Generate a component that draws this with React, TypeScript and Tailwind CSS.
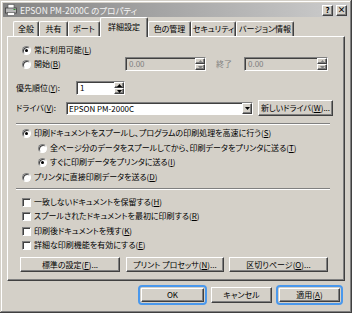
import React from "react";

const raised =
  "bg-[#d4d0c8] border border-t-white border-l-white border-r-[#404040] border-b-[#404040] shadow-[inset_-1px_-1px_#808080]";
const sunken =
  "border border-t-[#808080] border-l-[#808080] border-r-white border-b-white shadow-[inset_1px_1px_#404040]";

const U = ({ children }: { children: React.ReactNode }) => <u className="underline underline-offset-1">{children}</u>;

const Radio = ({ checked }: { checked?: boolean }) => (
  <span className="relative flex h-[9px] w-[9px] shrink-0 items-center justify-center rounded-full border border-t-[#808080] border-l-[#808080] border-r-white border-b-white bg-white shadow-[inset_1px_1px_#404040]">
    {checked && <span className="h-[3px] w-[3px] rounded-full bg-black" />}
  </span>
);

const Check = () => <span className={`h-[9px] w-[9px] shrink-0 bg-white ${sunken}`} />;

const Tri = ({ up, dim }: { up?: boolean; dim?: boolean }) => (
  <svg width="5" height="3" viewBox="0 0 5 3">
    <polygon points={up ? "2.5,0 5,3 0,3" : "0,0 5,0 2.5,3"} fill={dim ? "#808080" : "#000"} />
  </svg>
);

const Spin = ({ value, w, disabled }: { value: string; w: string; disabled?: boolean }) => (
  <div className={`flex h-[14px] items-stretch ${w} ${sunken} ${disabled ? "bg-[#d4d0c8] text-[#808080]" : "bg-white"}`}>
    <span className="flex-1 pl-[3px] leading-[12px]">{value}</span>
    <div className="flex w-[10px] flex-col">
      <span className={`flex flex-1 items-center justify-center ${raised}`}>
        <Tri up dim={disabled} />
      </span>
      <span className={`flex flex-1 items-center justify-center ${raised}`}>
        <Tri dim={disabled} />
      </span>
    </div>
  </div>
);

const Btn = ({ children, w, h = "h-[15px]" }: { children: React.ReactNode; w: string; h?: string }) => (
  <div className={`flex items-center justify-center ${w} ${h} ${raised}`}>{children}</div>
);

const Tab = ({ label, w, active }: { label: string; w: string; active?: boolean }) => (
  <div
    className={`flex items-center justify-center rounded-t-[2px] border-t border-l border-r border-t-white border-l-white border-r-[#404040] bg-[#d4d0c8] shadow-[inset_-1px_0_#808080] ${w} ${
      active ? "relative z-10 mb-[-1px] h-[20px] pb-[2px]" : "h-[15px]"
    }`}
  >
    {label}
  </div>
);

const Sep = () => <div className="ml-[8px] h-[2px] w-[314px] border-t border-t-[#808080] border-b border-b-white" />;

export default function App() {
  return (
    <div className="h-[313px] w-[352px] overflow-hidden bg-[#d4d0c8] p-[3px] font-['Noto_Sans_CJK_JP',sans-serif] text-[8px] leading-[12px] text-black shadow-[inset_-1px_-1px_#404040,inset_1px_1px_#d4d0c8,inset_-2px_-2px_#808080,inset_2px_2px_#ffffff] [font-feature-settings:'palt']">
      {/* title bar */}
      <div className="flex h-[14px] items-center bg-gradient-to-r from-[#848484] to-[#cdcdcd] pl-[2px] pr-[2px]">
        <svg width="12" height="12" viewBox="0 0 12 12">
          <rect x="3" y="0.5" width="6" height="4" fill="#fff" stroke="#555" strokeWidth="0.6" />
          <rect x="0.5" y="4" width="11" height="5" fill="#b8b8b8" stroke="#333" strokeWidth="0.7" />
          <rect x="2.5" y="8.5" width="7" height="3" fill="#fff" stroke="#555" strokeWidth="0.6" />
          <rect x="8.5" y="5" width="2" height="1" fill="#2a8a2a" />
        </svg>
        <span className="ml-[3px] flex-1 text-[8.5px] text-[#f4f4f4]">EPSON PM-2000C のプロパティ</span>
        <div className={`flex h-[11px] w-[11px] items-center justify-center text-[8px] font-bold leading-none ${raised}`}>?</div>
        <div className={`ml-[3px] flex h-[11px] w-[11px] items-center justify-center text-[8px] font-bold leading-none ${raised}`}>×</div>
      </div>

      <div className="px-[4px]">
        {/* tabs */}
        <div className="flex h-[19px] items-end pl-[6px]">
          <Tab label="全般" w="w-[26px]" />
          <Tab label="共有" w="w-[29px]" />
          <Tab label="ポート" w="w-[32px]" />
          <Tab label="詳細設定" w="w-[48px]" active />
          <Tab label="色の管理" w="w-[43px]" />
          <Tab label="セキュリティ" w="w-[45px]" />
          <Tab label="バージョン情報" w="w-[58px]" />
        </div>

        {/* panel */}
        <div className="flex h-[245px] flex-col border border-t-white border-l-white border-r-[#404040] border-b-[#404040] shadow-[inset_-1px_-1px_#808080]">
          <div className="ml-[14px] mt-[7px] flex h-[12px] items-center gap-[3px]">
            <Radio checked />
            <span>
              常に利用可能(<U>L</U>)
            </span>
          </div>

          <div className="ml-[14px] mt-[1px] flex h-[14px] items-center">
            <div className="flex w-[103px] items-center gap-[3px]">
              <Radio />
              <span>
                開始(<U>B</U>)
              </span>
            </div>
            <Spin value="0.00" w="w-[81px]" disabled />
            <span className="ml-[10px] w-[28px] text-[#808080]">終了</span>
            <Spin value="0.00" w="w-[84px]" disabled />
          </div>

          <div className="ml-[8px] mt-[10px] flex h-[14px] items-center">
            <span className="w-[60px]">
              優先順位(<U>Y</U>):
            </span>
            <Spin value="1" w="w-[49px]" />
          </div>

          <div className="ml-[8px] mt-[5px] flex h-[16px] items-center">
            <span className="w-[50px]">
              ドライバ(<U>V</U>):
            </span>
            <div className={`flex h-[13px] w-[187px] items-stretch bg-white ${sunken}`}>
              <span className="flex-1 pl-[2px] leading-[11px]">EPSON PM-2000C</span>
              <span className={`flex w-[10px] items-center justify-center ${raised}`}>
                <Tri />
              </span>
            </div>
            <div className="ml-[5px]">
              <Btn w="w-[75px]" h="h-[16px]">
                新しいドライバ(<U>W</U>)...
              </Btn>
            </div>
          </div>

          <div className="mt-[7px]">
            <Sep />
          </div>

          <div className="ml-[14px] mt-[2px] flex h-[12px] items-center gap-[3px]">
            <Radio checked />
            <span>
              印刷ドキュメントをスプールし、プログラムの印刷処理を高速に行う(<U>S</U>)
            </span>
          </div>
          <div className="ml-[30px] mt-[3px] flex h-[12px] items-center gap-[3px]">
            <Radio />
            <span>
              全ページ分のデータをスプールしてから、印刷データをプリンタに送る(<U>T</U>)
            </span>
          </div>
          <div className="ml-[30px] mt-[2px] flex h-[12px] items-center gap-[3px]">
            <Radio checked />
            <span>
              すぐに印刷データをプリンタに送る(<U>I</U>)
            </span>
          </div>
          <div className="ml-[14px] mt-[3px] flex h-[12px] items-center gap-[3px]">
            <Radio />
            <span>
              プリンタに直接印刷データを送る(<U>D</U>)
            </span>
          </div>

          <div className="mt-[5px]">
            <Sep />
          </div>

          <div className="ml-[14px] mt-[6px] flex h-[12px] items-center gap-[3px]">
            <Check />
            <span>
              一致しないドキュメントを保留する(<U>H</U>)
            </span>
          </div>
          <div className="ml-[14px] mt-[2px] flex h-[12px] items-center gap-[3px]">
            <Check />
            <span>
              スプールされたドキュメントを最初に印刷する(<U>R</U>)
            </span>
          </div>
          <div className="ml-[14px] mt-[3px] flex h-[12px] items-center gap-[3px]">
            <Check />
            <span>
              印刷後ドキュメントを残す(<U>K</U>)
            </span>
          </div>
          <div className="ml-[14px] mt-[2px] flex h-[12px] items-center gap-[3px]">
            <Check />
            <span>
              詳細な印刷機能を有効にする(<U>E</U>)
            </span>
          </div>

          <div className="ml-[12px] mt-[6px] flex">
            <Btn w="w-[100px]">
              標準の設定(<U>F</U>)...
            </Btn>
            <div className="ml-[6px]">
              <Btn w="w-[98px]">
                プリント プロセッサ(<U>N</U>)...
              </Btn>
            </div>
            <div className="ml-[5px]">
              <Btn w="w-[99px]">
                区切りページ(<U>O</U>)...
              </Btn>
            </div>
          </div>
        </div>

        {/* dialog buttons */}
        <div className="mt-[4px] flex h-[20px] pl-[131px]">
          <div className="rounded-[4px] border-2 border-[#4a98ec] p-px">
            <Btn w="w-[63px]" h="h-[14px]">
              OK
            </Btn>
          </div>
          <div className="ml-[4px] flex items-center">
            <Btn w="w-[61px]" h="h-[16px]">
              キャンセル
            </Btn>
          </div>
          <div className="ml-[4px] rounded-[4px] border-2 border-[#4a98ec] p-px">
            <Btn w="w-[61px]" h="h-[14px]">
              適用(<U>A</U>)
            </Btn>
          </div>
        </div>
      </div>
    </div>
  );
}
